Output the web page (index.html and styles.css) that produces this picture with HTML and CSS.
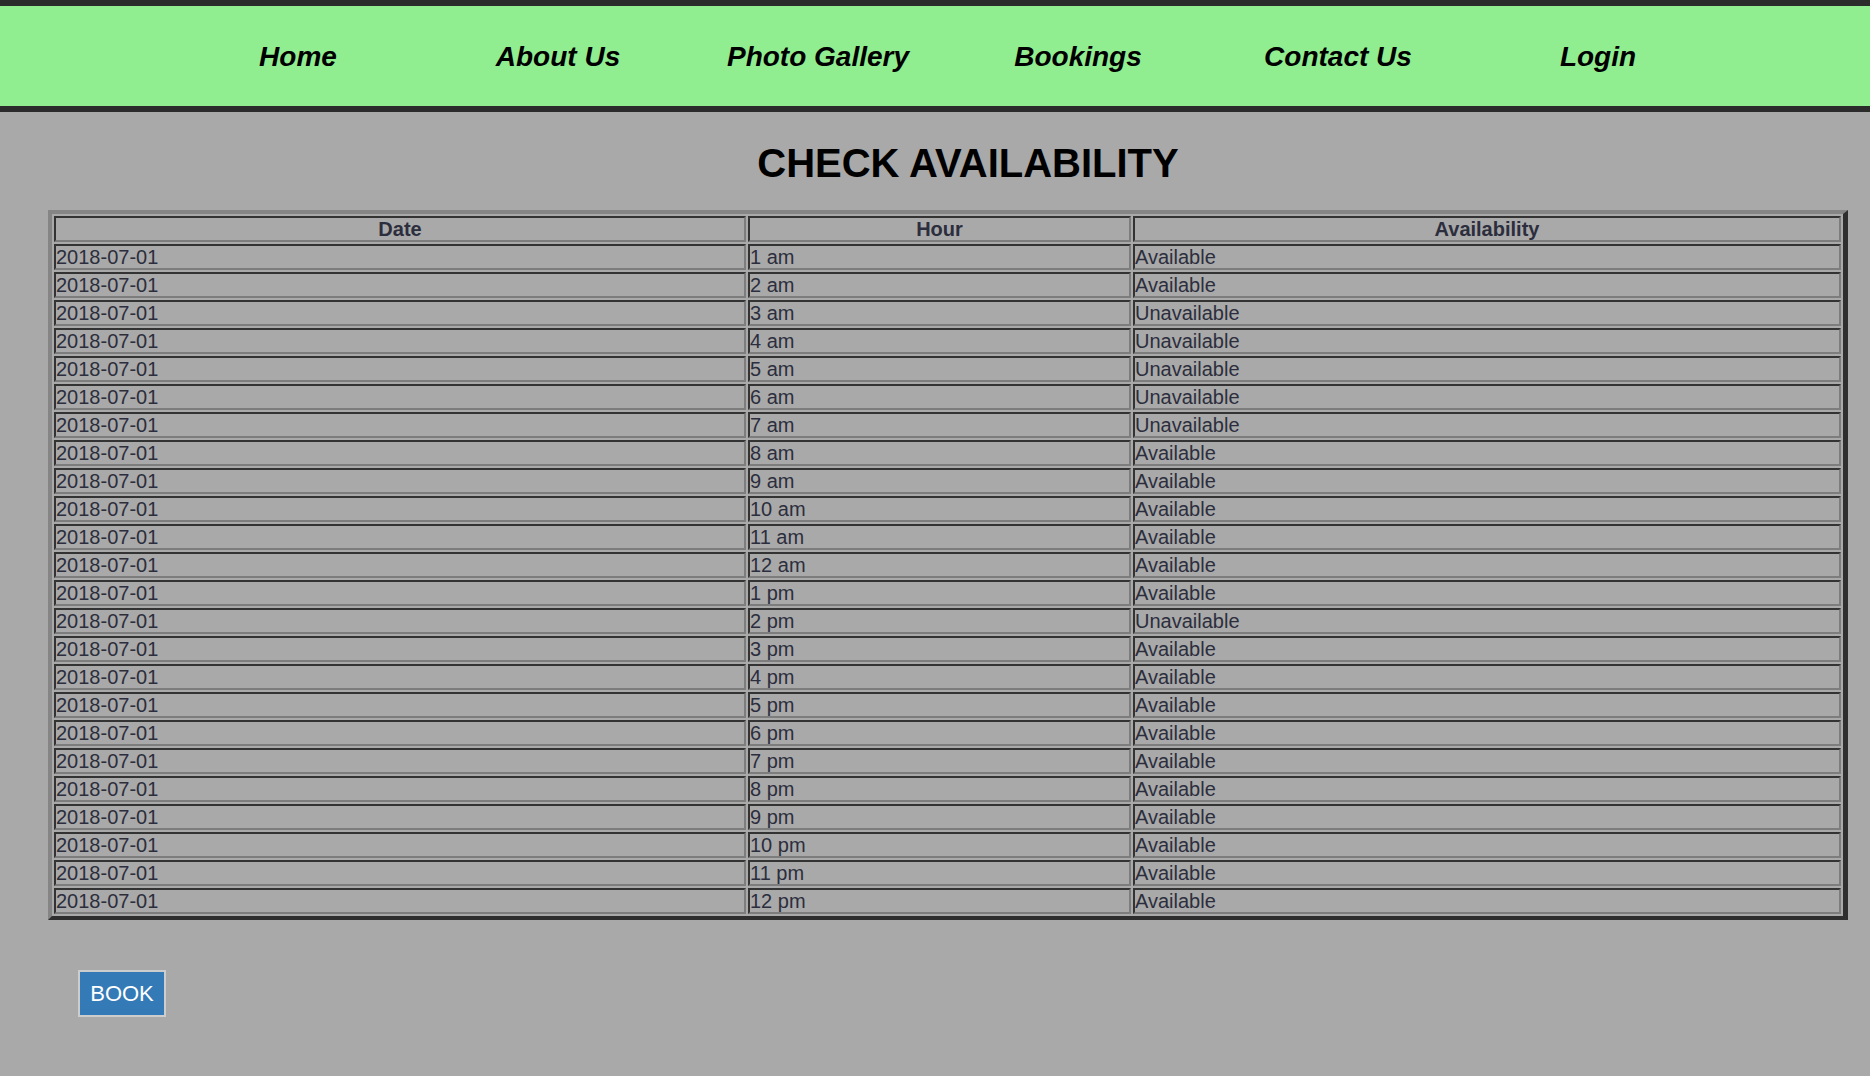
FILE: index.html
```html
<!DOCTYPE html>
<html>
<head>
<meta charset="utf-8">
<title>Check Availability</title>
<link rel="stylesheet" href="styles.css">
</head>
<body>
<nav class="topnav">
  <ul class="menu">
    <li><a href="#">Home</a></li>
    <li><a href="#">About Us</a></li>
    <li><a href="#">Photo Gallery</a></li>
    <li><a href="#">Bookings</a></li>
    <li><a href="#">Contact Us</a></li>
    <li><a href="#">Login</a></li>
  </ul>
</nav>
<main class="content">
  <h1 class="title">CHECK AVAILABILITY</h1>
  <table class="avail">
    <thead>
      <tr><th class="c-date">Date</th><th class="c-hour">Hour</th><th class="c-av">Availability</th></tr>
    </thead>
    <tbody>
      <tr><td>2018-07-01</td><td>1 am</td><td>Available</td></tr>
      <tr><td>2018-07-01</td><td>2 am</td><td>Available</td></tr>
      <tr><td>2018-07-01</td><td>3 am</td><td>Unavailable</td></tr>
      <tr><td>2018-07-01</td><td>4 am</td><td>Unavailable</td></tr>
      <tr><td>2018-07-01</td><td>5 am</td><td>Unavailable</td></tr>
      <tr><td>2018-07-01</td><td>6 am</td><td>Unavailable</td></tr>
      <tr><td>2018-07-01</td><td>7 am</td><td>Unavailable</td></tr>
      <tr><td>2018-07-01</td><td>8 am</td><td>Available</td></tr>
      <tr><td>2018-07-01</td><td>9 am</td><td>Available</td></tr>
      <tr><td>2018-07-01</td><td>10 am</td><td>Available</td></tr>
      <tr><td>2018-07-01</td><td>11 am</td><td>Available</td></tr>
      <tr><td>2018-07-01</td><td>12 am</td><td>Available</td></tr>
      <tr><td>2018-07-01</td><td>1 pm</td><td>Available</td></tr>
      <tr><td>2018-07-01</td><td>2 pm</td><td>Unavailable</td></tr>
      <tr><td>2018-07-01</td><td>3 pm</td><td>Available</td></tr>
      <tr><td>2018-07-01</td><td>4 pm</td><td>Available</td></tr>
      <tr><td>2018-07-01</td><td>5 pm</td><td>Available</td></tr>
      <tr><td>2018-07-01</td><td>6 pm</td><td>Available</td></tr>
      <tr><td>2018-07-01</td><td>7 pm</td><td>Available</td></tr>
      <tr><td>2018-07-01</td><td>8 pm</td><td>Available</td></tr>
      <tr><td>2018-07-01</td><td>9 pm</td><td>Available</td></tr>
      <tr><td>2018-07-01</td><td>10 pm</td><td>Available</td></tr>
      <tr><td>2018-07-01</td><td>11 pm</td><td>Available</td></tr>
      <tr><td>2018-07-01</td><td>12 pm</td><td>Available</td></tr>
    </tbody>
  </table>
  <div class="actions">
    <button class="book-btn" type="button">BOOK</button>
  </div>
</main>
</body>
</html>
```

FILE: styles.css
```css
html, body {
  margin: 0;
  padding: 0;
}
html {
  background: #a9a9a9;
}
body {
  background: #a9a9a9;
  font-family: "Liberation Sans", Arial, Helvetica, sans-serif;
  color: #2c2e3d;
}

.topnav {
  background: #90ee90;
  border-top: 6px solid #2b2b2b;
  border-bottom: 6px solid #2b2b2b;
  height: 100px;
  display: flex;
  align-items: center;
  justify-content: center;
  padding-left: 26px;
  padding-top: 2px;
  box-sizing: border-box;
  height: 112px;
}
.menu {
  list-style: none;
  margin: 0;
  padding: 0;
  display: flex;
}
.menu li {
  width: 260px;
  text-align: center;
}
.menu a {
  color: #000;
  text-decoration: none;
  font-size: 28px;
  font-weight: bold;
  font-style: italic;
  line-height: 32px;
}

.content {
  padding: 0 0 0 48px;
}
.title {
  margin: 28px 0 24px 0;
  padding-left: 40px;
  width: 1800px;
  box-sizing: border-box;
  text-align: center;
  font-size: 40px;
  line-height: 46px;
  font-weight: bold;
  color: #000;
}

.avail {
  width: 1800px;
  table-layout: fixed;
  border-collapse: separate;
  border-spacing: 2px;
  border-style: solid;
  border-width: 4px 5px 4px 4px;
  border-color: #858585 #2e2e2e #2e2e2e #858585;
  font-size: 20px;
  line-height: 22px;
}
.avail th,
.avail td {
  box-sizing: border-box;
  padding: 0;
  border-style: solid;
  border-width: 2px;
  border-color: #333333 #7d7d7d #7d7d7d #333333;
  text-align: left;
  white-space: nowrap;
  height: 26px;
  color: #2c2e3d;
}
.avail th {
  text-align: center;
  font-weight: bold;
}
.avail .c-date { width: 692px; }
.avail .c-hour { width: 383px; }

.actions {
  padding: 50px 0 0 30px;
}
.book-btn {
  background: #337ab7;
  color: #fff;
  border: 2px solid #cdcdcd;
  font-family: "Liberation Sans", Arial, Helvetica, sans-serif;
  font-size: 22px;
  line-height: 25px;
  padding: 9px 10px 9px 10px;
  width: 88px;
  height: 47px;
  box-sizing: border-box;
  text-align: center;
  cursor: pointer;
}
```
